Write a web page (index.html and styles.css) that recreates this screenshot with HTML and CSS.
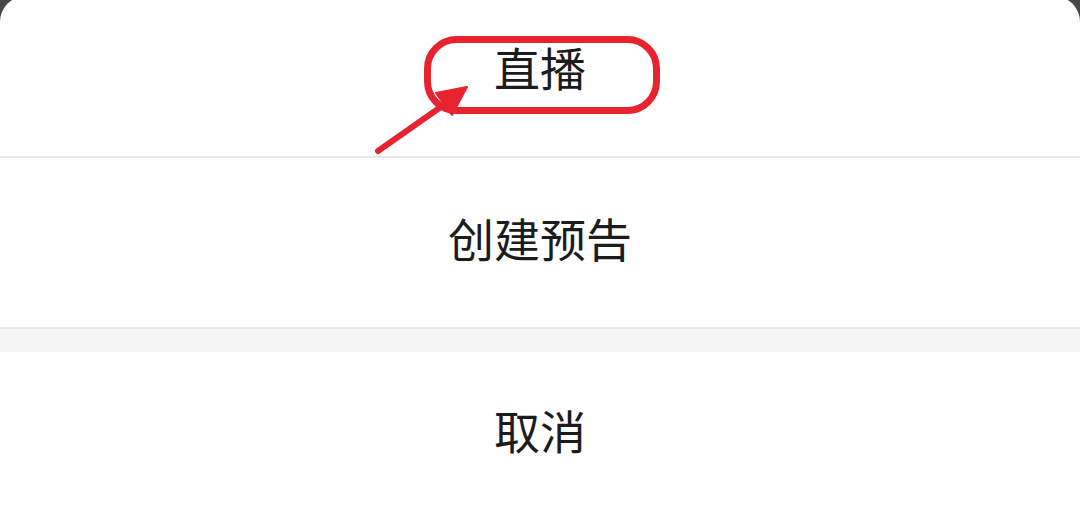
FILE: index.html
```html
<!DOCTYPE html>
<html lang="zh-CN">
<head>
<meta charset="utf-8">
<title>直播</title>
<link rel="stylesheet" href="styles.css">
</head>
<body>
<div class="sheet">
  <div class="item item-first">直播</div>
  <div class="item item-second">创建预告</div>
  <div class="gap"></div>
  <div class="item item-cancel">取消</div>
</div>
<svg class="annot" width="1080" height="516" viewBox="0 0 1080 516" xmlns="http://www.w3.org/2000/svg">
  <rect x="427.5" y="39.5" width="229" height="71" rx="29" ry="29" fill="none" stroke="#e82330" stroke-width="7"/>
  <line x1="378" y1="151" x2="445" y2="104" stroke="#e82330" stroke-width="6" stroke-linecap="round"/>
  <polygon points="467,87 436,93 452,115" fill="#e82330" stroke="#e82330" stroke-width="2" stroke-linejoin="round"/>
</svg>
</body>
</html>
```

FILE: styles.css
```css
html, body {
  margin: 0;
  padding: 0;
  width: 1080px;
  height: 516px;
  overflow: hidden;
  background: #484848;
}

body {
  position: relative;
  font-family: "Noto Sans CJK SC", "Noto Sans", sans-serif;
}

.sheet {
  margin-top: -4px;
  height: 520px;
  background: #ffffff;
  border-radius: 26px 26px 0 0;
  display: flex;
  flex-direction: column;
}

.item {
  box-sizing: border-box;
  text-align: center;
  font-size: 46px;
  line-height: 1;
  color: #1c1c1c;
}

.item-first {
  height: 162px;
  padding-top: 47px;
  border-bottom: 2px solid #e8e8e8;
}

.item-second {
  height: 169px;
  padding-top: 56px;
}

.gap {
  height: 25px;
  box-sizing: border-box;
  background: #f5f5f5;
  border-top: 2px solid #e8e8e8;
}

.item-cancel {
  flex: 1;
  padding-top: 54px;
}

.annot {
  position: absolute;
  left: 0;
  top: 0;
  pointer-events: none;
}
```
